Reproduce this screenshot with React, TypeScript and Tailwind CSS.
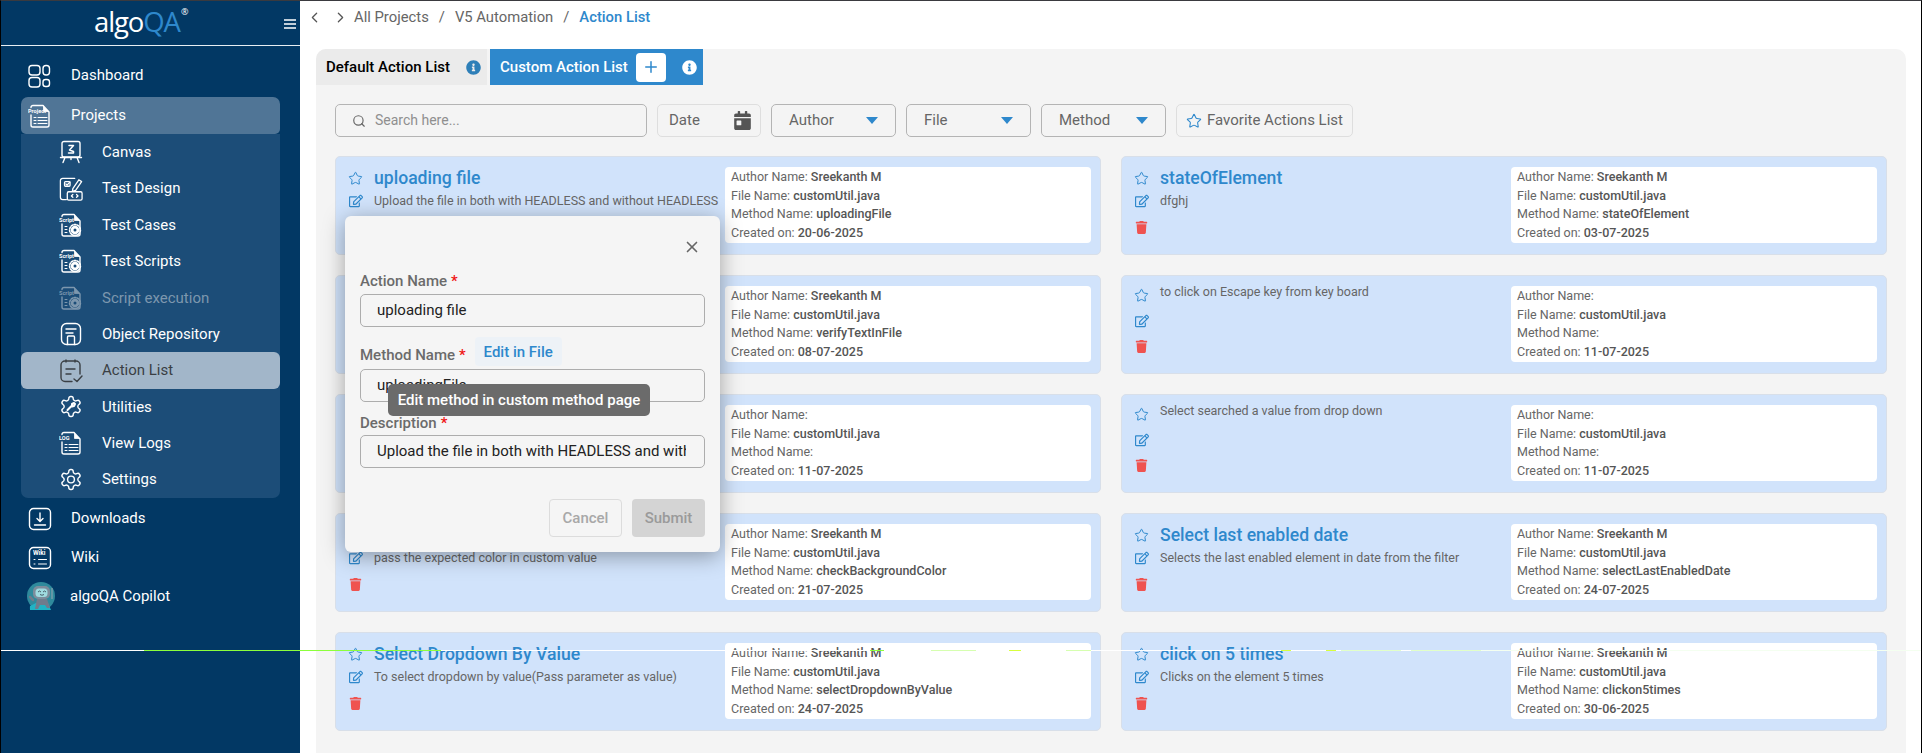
import React from "react";
import { Star, Search, X, ChevronLeft, ChevronRight, Plus } from "lucide-react";
import { FaRegEdit, FaTrash, FaInfoCircle, FaCalendarDay } from "react-icons/fa";

const S = { fill: "none", stroke: "currentColor", strokeWidth: 1.4, strokeLinecap: "round" as const, strokeLinejoin: "round" as const };

const DashIcon = () => (
  <svg viewBox="0 0 24 24" className="w-6 h-6" {...S}>
    <rect x="1" y="1.5" width="11" height="9.5" rx="3" /><rect x="15" y="1.5" width="6.5" height="9.5" rx="3" />
    <rect x="1" y="13.5" width="11" height="9.5" rx="3" /><rect x="15" y="15.5" width="6.5" height="7" rx="2.5" />
  </svg>
);
const DocIcon = ({ label, gear }: { label: string; gear?: boolean }) => (
  <svg viewBox="0 0 24 24" className="w-6 h-6" {...S}>
    <path d="M3 3.5V3.5a2 2 0 0 1 2-2H15l6 6.5v13a2 2 0 0 1-2 2H5a2 2 0 0 1-2-2V11" />
    <path d="M15.5 2v5.5h5" fill="currentColor" strokeWidth="0.8" />
    <text x="0" y="9" fontSize="5.6" fontFamily="Roboto" fontWeight="700" fill="currentColor" stroke="none">{label}</text>
    <path d="M6 13.5h2M6 16.5h2M6 19.5h2" strokeWidth="1" />
    {gear ? (
      <g>
        <circle cx="16" cy="17" r="4.3" fill="currentColor" stroke="none" />
        <circle cx="16" cy="17" r="5.4" strokeDasharray="1.6 1.4" strokeWidth="1.6" />
        <circle cx="16" cy="17" r="1.5" fill="#1c4d78" stroke="none" />
      </g>
    ) : (
      <path d="M10 13.5h9M10 16.5h9M10 19.5h9" strokeWidth="1" />
    )}
  </svg>
);
const CanvasIcon = () => (
  <svg viewBox="0 0 24 24" className="w-6 h-6" {...S}>
    <rect x="3" y="1.5" width="18" height="15.5" rx="2" />
    <path d="M1.5 17.5h21M6 17.5l-2 5M18 17.5l2 5M12 17.5v2" />
    <path d="M10 5.5h4.5l-4 4.5 4 1.5v1.5h-5" strokeWidth="1.5" />
  </svg>
);
const DesignIcon = () => (
  <svg viewBox="0 0 26 26" className="w-[26px] h-[26px]" {...S}>
    <path d="M17 1.5H4a2.5 2.5 0 0 0-2.5 2.5v18A2.5 2.5 0 0 0 4 24.5h4" />
    <rect x="6" y="5" width="6" height="5" rx="1" /><path d="M7.5 7.5l1.3 1.2 3-3.2" />
    <path d="M15 12.5L21.5 3l3 2-6.5 9.5-3.5 1z" />
    <rect x="9" y="16" width="16" height="9" rx="1.5" /><path d="M15 19l-1.6 1.5L15 22M19 19l1.6 1.5L19 22" />
  </svg>
);
const RepoIcon = () => (
  <svg viewBox="0 0 24 24" className="w-6 h-6" {...S}>
    <rect x="2.5" y="1.5" width="19" height="21" rx="5" />
    <path d="M7 7h10M7 11h7" />
    <path d="M8.5 22.5V15a1 1 0 0 1 1-1h5a1 1 0 0 1 1 1v7.5" />
  </svg>
);
const ActionIcon = () => (
  <svg viewBox="0 0 24 24" className="w-6 h-6" {...S}>
    <path d="M13 22.5H6a4 4 0 0 1-4-4V6a4 4 0 0 1 4-4h11a4 4 0 0 1 4 4v9" />
    <path d="M7 1v2M16 1v2M7 10h9M7 15h5" />
    <path d="M15 20l3 2.5 5-5.5" />
  </svg>
);
const GearIcon = ({ tool }: { tool?: boolean }) => (
  <svg viewBox="0 0 24 24" className="w-[25px] h-[25px]" {...S}>
    <path d="M12.22 2h-.44a2 2 0 0 0-2 2v.18a2 2 0 0 1-1 1.73l-.43.25a2 2 0 0 1-2 0l-.15-.08a2 2 0 0 0-2.73.73l-.22.38a2 2 0 0 0 .73 2.73l.15.1a2 2 0 0 1 1 1.72v.51a2 2 0 0 1-1 1.74l-.15.09a2 2 0 0 0-.73 2.73l.22.38a2 2 0 0 0 2.73.73l.15-.08a2 2 0 0 1 2 0l.43.25a2 2 0 0 1 1 1.73V20a2 2 0 0 0 2 2h.44a2 2 0 0 0 2-2v-.18a2 2 0 0 1 1-1.73l.43-.25a2 2 0 0 1 2 0l.15.08a2 2 0 0 0 2.73-.73l.22-.39a2 2 0 0 0-.73-2.73l-.15-.08a2 2 0 0 1-1-1.74v-.5a2 2 0 0 1 1-1.74l.15-.09a2 2 0 0 0 .73-2.73l-.22-.38a2 2 0 0 0-2.73-.73l-.15.08a2 2 0 0 1-2 0l-.43-.25a2 2 0 0 1-1-1.73V4a2 2 0 0 0-2-2z" />
    {tool ? <path d="M8.5 15.5l4-4M13 9.5l2-1 1 1-1 2-2 .5z" strokeWidth="2" /> : <circle cx="12" cy="12" r="3.4" />}
  </svg>
);
const DownloadIcon = () => (
  <svg viewBox="0 0 24 24" className="w-6 h-6" {...S}>
    <rect x="1.5" y="1.5" width="21" height="21" rx="4" />
    <path d="M12 6v8M9 11.5l3 3 3-3M6.5 18h11" />
  </svg>
);
const WikiIcon = () => (
  <svg viewBox="0 0 24 24" className="w-6 h-6" {...S}>
    <rect x="1.5" y="1.5" width="21" height="21" rx="4" />
    <text x="5" y="9" fontSize="6.4" fontFamily="Roboto" fontWeight="700" fill="currentColor" stroke="none">Wiki</text>
    <path d="M6 13.5h1M6 18h1M10.5 13.5h8M10.5 18h8" strokeWidth="1" />
  </svg>
);
const BotIcon = () => (
  <svg viewBox="0 0 30 30" className="w-[30px] h-[30px]">
    <circle cx="14" cy="15" r="14" fill="#2f8a9c" />
    <path d="M3 29a14 14 0 0 1 0-4l6-3h12l3 7z" fill="#20b3c4" />
    <rect x="6" y="5" width="17" height="13" rx="5" fill="#7d8d9c" />
    <rect x="8.5" y="7.5" width="12" height="8.5" rx="3.5" fill="#9fdbe0" />
    <path d="M11 11l1.5-1 1.5 1M16 11l1.5-1 1.5 1M13 13.5q2 1.5 4 0" stroke="#33424f" strokeWidth="0.8" fill="none" />
    <path d="M10 18h10l3 9h-3l-2-3h-5l-2 4h-3z" fill="#6f7c8c" />
    <path d="M6 19l-3-3" stroke="#6f7c8c" strokeWidth="2.5" strokeLinecap="round" />
    <path d="M25 7v11" stroke="#9aa5b0" strokeWidth="1" />
  </svg>
);

function NavTop({ icon, label, active, pad = "" }: { icon: React.ReactNode; label: string; active?: boolean; pad?: string }) {
  return (
    <div className={`mx-[20px] flex items-center pl-[7px] rounded-t-[7px] rounded-b-[5px] ${active ? "bg-[#507596] h-[37px]" : ""} ${pad}`}>
      <span className="w-6 flex justify-center shrink-0">{icon}</span>
      <span className="ml-[19px] text-[15px] whitespace-nowrap">{label}</span>
    </div>
  );
}
function NavSub({ icon, label, state }: { icon: React.ReactNode; label: string; state?: "active" | "off" }) {
  const c = state === "active" ? "bg-[#a2b6c9] text-[#3a3f44] rounded-[6px]" : state === "off" ? "text-[#7d97ae]" : "";
  return (
    <div className={`h-[36.4px] flex items-center pl-[38px] ${c}`}>
      <span className="w-6 flex justify-center shrink-0">{icon}</span>
      <span className="ml-[19px] text-[15px] whitespace-nowrap">{label}</span>
    </div>
  );
}

function Sidebar() {
  return (
    <aside className="w-[299px] shrink-0 bg-[#023864] text-white flex flex-col">
      <div className="h-[45px] border-b border-[#e8eef3] flex items-center relative shrink-0">
        <div className="ml-[93px] text-[27.5px] leading-none font-['Open_Sans',sans-serif] tracking-[-1.1px] flex -mt-[2px]">
          <span>algo</span><span className="text-[#2e88cc]">QA</span><span className="text-[9px] -mt-[1px] ml-[1px]">®</span>
        </div>
        <svg viewBox="0 0 12 10" className="absolute left-[283px] top-[18px] w-[12px] h-[10px]" stroke="currentColor" strokeWidth="1.5"><path d="M0 1h12M0 5h12M0 9h12" /></svg>
      </div>
      <div className="h-[51px] pt-[11px] shrink-0"><NavTop icon={<DashIcon />} label="Dashboard" pad="h-[37px]" /></div>
      <NavTop icon={<DocIcon label="Project" />} label="Projects" active />
      <div className="mx-[20px] bg-[#1c4d78] rounded-b-[7px] h-[364px] shrink-0">
        <NavSub icon={<CanvasIcon />} label="Canvas" />
        <NavSub icon={<DesignIcon />} label="Test Design" />
        <NavSub icon={<DocIcon label="Script" gear />} label="Test Cases" />
        <NavSub icon={<DocIcon label="Script" gear />} label="Test Scripts" />
        <NavSub icon={<DocIcon label="Script" gear />} label="Script execution" state="off" />
        <NavSub icon={<RepoIcon />} label="Object Repository" />
        <NavSub icon={<ActionIcon />} label="Action List" state="active" />
        <NavSub icon={<GearIcon tool />} label="Utilities" />
        <NavSub icon={<DocIcon label="LOG" />} label="View Logs" />
        <NavSub icon={<GearIcon />} label="Settings" />
      </div>
      <div className="mt-[1px] h-[39px] flex items-center shrink-0"><div className="w-full"><NavTop icon={<DownloadIcon />} label="Downloads" /></div></div>
      <div className="h-[39px] flex items-center shrink-0"><div className="w-full"><NavTop icon={<WikiIcon />} label="Wiki" /></div></div>
      <div className="h-[38px] flex items-center shrink-0 pl-[26px]">
        <BotIcon />
        <span className="ml-[13px] text-[15px]">algoQA Copilot</span>
      </div>
    </aside>
  );
}

type CardData = { title?: string; desc: string; desc2?: string; author: string; method: string; date: string };
const cards: CardData[] = [
  { title: "uploading file", desc: "Upload the file in both with HEADLESS and without HEADLESS", desc2: "mode [pass the upload location as parameter, custom value]", author: "Sreekanth M", method: "uploadingFile", date: "20-06-2025" },
  { title: "stateOfElement", desc: "dfghj", author: "Sreekanth M", method: "stateOfElement", date: "03-07-2025" },
  { title: "verifyTextInFile", desc: "verify text in file", author: "Sreekanth M", method: "verifyTextInFile", date: "08-07-2025" },
  { desc: "to click on Escape key from key board", author: "", method: "", date: "11-07-2025" },
  { desc: "", author: "", method: "", date: "11-07-2025" },
  { desc: "Select searched a value from drop down", author: "", method: "", date: "11-07-2025" },
  { title: "checkBackgroundColor", desc: "pass the expected color in custom value", author: "Sreekanth M", method: "checkBackgroundColor", date: "21-07-2025" },
  { title: "Select last enabled date", desc: "Selects the last enabled element in date from the filter", author: "Sreekanth M", method: "selectLastEnabledDate", date: "24-07-2025" },
  { title: "Select Dropdown By Value", desc: "To select dropdown by value(Pass parameter as value)", author: "Sreekanth M", method: "selectDropdownByValue", date: "24-07-2025" },
  { title: "click on 5 times", desc: "Clicks on the element 5 times", author: "Sreekanth M", method: "clickon5times", date: "30-06-2025" },
];

const Ic = ({ children }: { children: React.ReactNode }) => <span className="w-[15px] flex justify-center shrink-0 mr-[11px] items-center">{children}</span>;
const StarI = () => <Star size={15} strokeWidth={1.6} className="text-[#2e88cc]" />;
const EditI = () => <FaRegEdit size={14} className="text-[#2e88cc]" />;
const TrashI = () => <FaTrash size={13} className="text-[#ef5350]" />;

function Card({ c }: { c: CardData }) {
  return (
    <div className="h-[99px] bg-[#d1e3fb] border border-[#d8dfe9] rounded-[5px] flex overflow-hidden">
      <div className="flex-1 min-w-0 pl-[12px] pt-[8px] text-[12.5px] text-[#666]">
        {c.title ? (
          <>
            <div className="flex items-center h-[26px]"><Ic><StarI /></Ic><span className="text-[17.6px] text-[#2e88cc] font-medium whitespace-nowrap">{c.title}</span></div>
            <div className="flex items-center h-[20px]"><Ic><EditI /></Ic><span className="whitespace-nowrap">{c.desc}</span></div>
            {c.desc2 ? <div className="h-0"><div className="pl-[26px] h-[20px] leading-[26px] whitespace-nowrap overflow-hidden">{c.desc2}</div></div> : null}
            <div className="flex items-center h-[20px] mt-[6px]"><Ic><TrashI /></Ic></div>
          </>
        ) : (
          <>
            <div className="flex items-center h-[22px]"><Ic><StarI /></Ic><span className="whitespace-nowrap -mt-[6px]">{c.desc}</span></div>
            <div className="flex items-center h-[20px] mt-[5px]"><Ic><EditI /></Ic></div>
            <div className="flex items-center h-[20px] mt-[5px]"><Ic><TrashI /></Ic></div>
          </>
        )}
      </div>
      <div className="w-[366px] shrink-0 mt-[10px] mb-[11px] mr-[9px] bg-white rounded-[4px] pl-[6px] pt-[1px] text-[12.5px] leading-[18.67px] text-[#666]">
        <div>Author Name: <b className="font-medium text-[#555]">{c.author}</b></div>
        <div>File Name: <b className="font-medium text-[#555]">customUtil.java</b></div>
        <div>Method Name: <b className="font-medium text-[#555]">{c.method}</b></div>
        <div>Created on: <b className="font-medium text-[#555]">{c.date}</b></div>
      </div>
    </div>
  );
}

const Caret = () => <svg viewBox="0 0 12 7" className="w-[12px] h-[7px] text-[#2e88cc]" fill="currentColor"><path d="M0 0h12L6 7z" /></svg>;

function Drop({ label }: { label: string }) {
  return (
    <div className="w-[125px] h-[33px] border border-[#b4b4b4] rounded-[5px] flex items-center justify-between pl-[17px] pr-[17px] text-[15px] text-[#666] shrink-0">
      <span>{label}</span><Caret />
    </div>
  );
}

const Req = () => <span className="text-[#f01414] ml-[4px]">*</span>;
const Field = ({ value }: { value: string }) => (
  <div className="h-[33px] border border-[#adadad] rounded-[5px] pl-[16px] pr-[18px] flex items-center text-[15px] text-[#222] overflow-hidden whitespace-nowrap">
    <span className="overflow-hidden">{value}</span>
  </div>
);

function Dialog() {
  return (
    <div className="absolute left-[344px] top-[215px] w-[375px] h-[336px] bg-[#f5f5f5] rounded-[6px] shadow-[0_4px_22px_rgba(0,0,0,0.35)] px-[15px] pt-[53px]">
      <X size={18} strokeWidth={2.2} className="absolute right-[19px] top-[22px] text-[#666]" />
      <div className="text-[15px] font-medium text-[#6b6b6b] leading-[20px] h-[25px] pt-[2px]">Action Name<Req /></div>
      <Field value="uploading file" />
      <div className="h-[42px] flex items-end pb-[3px] relative">
        <span className="text-[15px] font-medium text-[#6b6b6b] leading-[20px] pb-[1px]">Method Name<Req /></span>
        <span className="ml-[9px] h-[29px] w-[87px] pt-[2px] rounded-[4px] bg-[#edf2f7] text-[#2e88cc] text-[15px] font-medium flex items-center justify-center">Edit in File</span>
      </div>
      <Field value="uploadingFile" />
      <div className="text-[15px] font-medium text-[#6b6b6b] leading-[20px] h-[33px] pt-[11px]">Description<Req /></div>
      <Field value="Upload the file in both with HEADLESS and without HEADLESS mode" />
      <div className="flex justify-end gap-[10px] mt-[31px]">
        <span className="w-[73px] h-[38px] border border-[#dcdcdc] rounded-[4px] text-[#a8a8a8] text-[15px] font-medium flex items-center justify-center">Cancel</span>
        <span className="w-[73px] h-[38px] bg-[#d4d4d4] rounded-[4px] text-[#9a9a9a] text-[15px] font-medium flex items-center justify-center">Submit</span>
      </div>
      <div className="absolute left-[43px] top-[168px] w-[262px] h-[32px] rounded-[5px] bg-[#6b6b6b] text-white text-[15px] font-medium flex items-center justify-center whitespace-nowrap">Edit method in custom method page</div>
    </div>
  );
}

const glitch = [
  "w-[143px] bg-white", "w-[297px] bg-[#8cff3c]", "w-[429px] bg-white", "w-[14px] bg-[#8cff3c]", "w-[47px] bg-white",
  "w-[45px] bg-[#d6ffb0]", "w-[33px] bg-white", "w-[12px] bg-[#d8ff3c]", "w-[45px] bg-white", "w-[25px] bg-[#d6ffb0]",
  "w-[190px] bg-white", "w-[10px] bg-[#d8ff3c]", "w-[35px] bg-white", "w-[10px] bg-[#d8ff3c]", "w-[5px] bg-white",
  "w-[60px] bg-[#e2ffc8]", "w-[10px] bg-white", "w-[70px] bg-[#e2ffc8]", "flex-1 bg-[#f4fff0]",
];

export default function App() {
  return (
    <div className="relative w-[1922px] h-[753px] overflow-hidden bg-white font-['Roboto',sans-serif] border-t border-t-[#3a3a3f] border-x border-x-black flex">
      <Sidebar />
      <main className="flex-1 min-w-0 pl-[16px] pr-[15px]">
        <div className="h-[32px] flex items-center text-[14.8px] text-[#666]">
          <ChevronLeft size={17} strokeWidth={1.8} className="-ml-[10px] text-[#555]" />
          <ChevronRight size={17} strokeWidth={1.8} className="ml-[9px] text-[#555]" />
          <span className="ml-[5px]">All Projects</span>
          <span className="mx-[10px]">/</span>
          <span>V5 Automation</span>
          <span className="mx-[10px]">/</span>
          <span className="text-[#2e88cc] font-medium">Action List</span>
        </div>
        <section className="mt-[16px] bg-[#f4f4f4] rounded-t-[10px] h-[704px]">
          <div className="flex h-[36px]">
            <div className="w-[171px] bg-[#ebebeb] rounded-tl-[10px] flex items-center pl-[10px] text-[15px] font-medium text-black whitespace-nowrap">
              <span>Default Action List</span>
              <FaInfoCircle size={15} className="ml-auto mr-[6px] text-[#2e7fb8]" />
            </div>
            <div className="ml-[3px] w-[213px] bg-[#2e88cc] flex items-center pl-[10px] text-[15px] font-medium text-white whitespace-nowrap">
              <span>Custom Action List</span>
              <span className="ml-[8px] w-[30px] h-[29px] bg-white rounded-[4px] flex items-center justify-center"><Plus size={18} strokeWidth={2} className="text-[#2e88cc]" /></span>
              <FaInfoCircle size={15} className="ml-auto mr-[6px] text-white" />
            </div>
          </div>
          <div className="px-[19px] pt-[19px]">
            <div className="flex gap-[10px] h-[33px]">
              <div className="w-[312px] border border-[#b4b4b4] rounded-[5px] flex items-center pl-[16px] text-[14px] text-[#8f8f8f] shrink-0">
                <Search size={14} strokeWidth={2} className="text-[#666] mr-[9px]" />Search here...
              </div>
              <div className="w-[104px] border border-[#dedede] rounded-[5px] flex items-center justify-between pl-[11px] pr-[8px] text-[15px] text-[#666] shrink-0">
                <span>Date</span><FaCalendarDay size={19} className="text-[#555]" />
              </div>
              <Drop label="Author" />
              <Drop label="File" />
              <Drop label="Method" />
              <div className="w-[177px] border border-[#dedede] rounded-[5px] flex items-center pl-[9px] text-[15px] text-[#666] whitespace-nowrap shrink-0">
                <Star size={16} strokeWidth={1.6} className="text-[#2e88cc] mr-[5px]" />Favorite Actions List
              </div>
            </div>
            <div className="mt-[19px] grid grid-cols-2 gap-x-[20px] gap-y-[20px]">
              {cards.map((c, i) => <Card key={i} c={c} />)}
            </div>
          </div>
        </section>
      </main>
      <Dialog />
      <div className="absolute left-0 right-0 top-[649px] h-px flex">
        {glitch.map((g, i) => <span key={i} className={g} />)}
      </div>
    </div>
  );
}
